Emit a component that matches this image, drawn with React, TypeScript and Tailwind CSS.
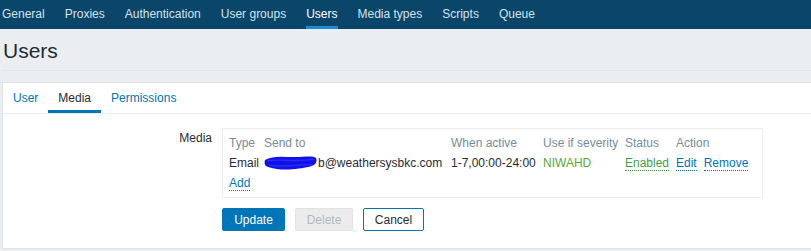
const navItems = [
  "General",
  "Proxies",
  "Authentication",
  "User groups",
  "Users",
  "Media types",
  "Scripts",
  "Queue",
];

const tabs = ["User", "Media", "Permissions"];

const cols = "grid grid-cols-[35px_187px_92px_82px_51px_auto] items-center";

const Scribble = () => (
  <svg width="55" height="17" viewBox="0 0 56 17" className="shrink-0 -mt-[2px]">
    <path
      d="M2 6 C 10 1, 22 3, 32 3 S 50 1, 54 4 C 56 9, 52 12, 46 13 S 26 17, 14 15 S 1 12, 2 6 Z"
      fill="#1010e8"
    />
    <path
      d="M4 7 C 16 4, 30 9, 52 5 M6 11 C 20 14, 36 10, 50 11"
      stroke="#2a2af5"
      strokeWidth="1.5"
      fill="none"
    />
  </svg>
);

const App = () => {
  return (
    <div className="w-[811px] h-[251px] overflow-hidden bg-[#ebeef0] font-['Liberation_Sans',Arial,sans-serif] text-[12px] text-[#1f2c33]">
      {/* top navigation */}
      <nav className="h-[29px] bg-[#0a466a] flex items-start pl-[2px] gap-5">
        {navItems.map((item) => (
          <div
            key={item}
            className={
              item === "Users"
                ? "h-[29px] pt-[7px] leading-[14px] text-white border-b-[3px] border-[#1f8ad4]"
                : "h-[29px] pt-[7px] leading-[14px] text-[#d5e2ea]"
            }
          >
            {item}
          </div>
        ))}
      </nav>

      <div className="pl-[2px]">
        <div className="w-[830px] border-b border-[#dfe4e7] h-[42px] pt-[10px] pl-[1px]">
          <h1 className="text-[21px] leading-[24px] text-[#1f2c33]">Users</h1>
        </div>

        <div className="mt-[11px] w-[830px] bg-white border border-[#dfe4e7] h-[167px]">
          {/* tabs */}
          <div className="flex border-b border-[#ebeef0] h-[31px]">
            {tabs.map((tab) => (
              <div
                key={tab}
                className={
                  tab === "Media"
                    ? "px-[10px] pt-[8px] leading-[14px] text-[#1f2c33] border-b-[3px] border-[#0275b8] h-[30px]"
                    : "px-[10px] pt-[8px] leading-[14px] text-[#0275b8] h-[30px]"
                }
              >
                {tab}
              </div>
            ))}
          </div>

          {/* form */}
          <div className="flex pt-[14px]">
            <div className="w-[219px] text-right pr-[10px] pt-[3px] leading-[14px]">
              Media
            </div>
            <div>
              <div className="w-[541px] h-[70px] border border-[#ebeef0] pt-[3px] pl-[6px] leading-[14px]">
                <div className={`${cols} h-[21px] text-[#768d99]`}>
                  <span>Type</span>
                  <span>Send to</span>
                  <span>When active</span>
                  <span>Use if severity</span>
                  <span>Status</span>
                  <span>Action</span>
                </div>
                <div className={`${cols} h-[20px]`}>
                  <span>Email</span>
                  <span className="flex items-center -ml-[1px]">
                    <Scribble />
                    <span>b@weathersysbkc.com</span>
                  </span>
                  <span>1-7,00:00-24:00</span>
                  <span className="text-[#59a832]">NIWAHD</span>
                  <span>
                    <span className="text-[#429e47] border-b border-dotted border-[#429e47]">
                      Enabled
                    </span>
                  </span>
                  <span className="col-span-1 flex gap-[7px] whitespace-nowrap">
                    <span className="text-[#0275b8] border-b border-dotted border-[#0275b8]">
                      Edit
                    </span>
                    <span className="text-[#0275b8] border-b border-dotted border-[#0275b8]">
                      Remove
                    </span>
                  </span>
                </div>
                <div className="h-[21px] flex items-center">
                  <span className="text-[#0275b8] border-b border-dotted border-[#0275b8]">
                    Add
                  </span>
                </div>
              </div>

              <div className="flex gap-[10px] mt-[10px]">
                <button className="w-[63px] h-[23px] rounded-[2px] bg-[#0275b8] text-white border border-[#0275b8]">
                  Update
                </button>
                <button className="w-[58px] h-[23px] rounded-[2px] bg-[#ebebeb] text-[#acbbc2] border border-[#dfe4e7]">
                  Delete
                </button>
                <button className="w-[61px] h-[23px] rounded-[2px] bg-white text-[#1f2c33] border border-[#0275b8]">
                  Cancel
                </button>
              </div>
            </div>
          </div>
        </div>
      </div>
    </div>
  );
};

export default App;
